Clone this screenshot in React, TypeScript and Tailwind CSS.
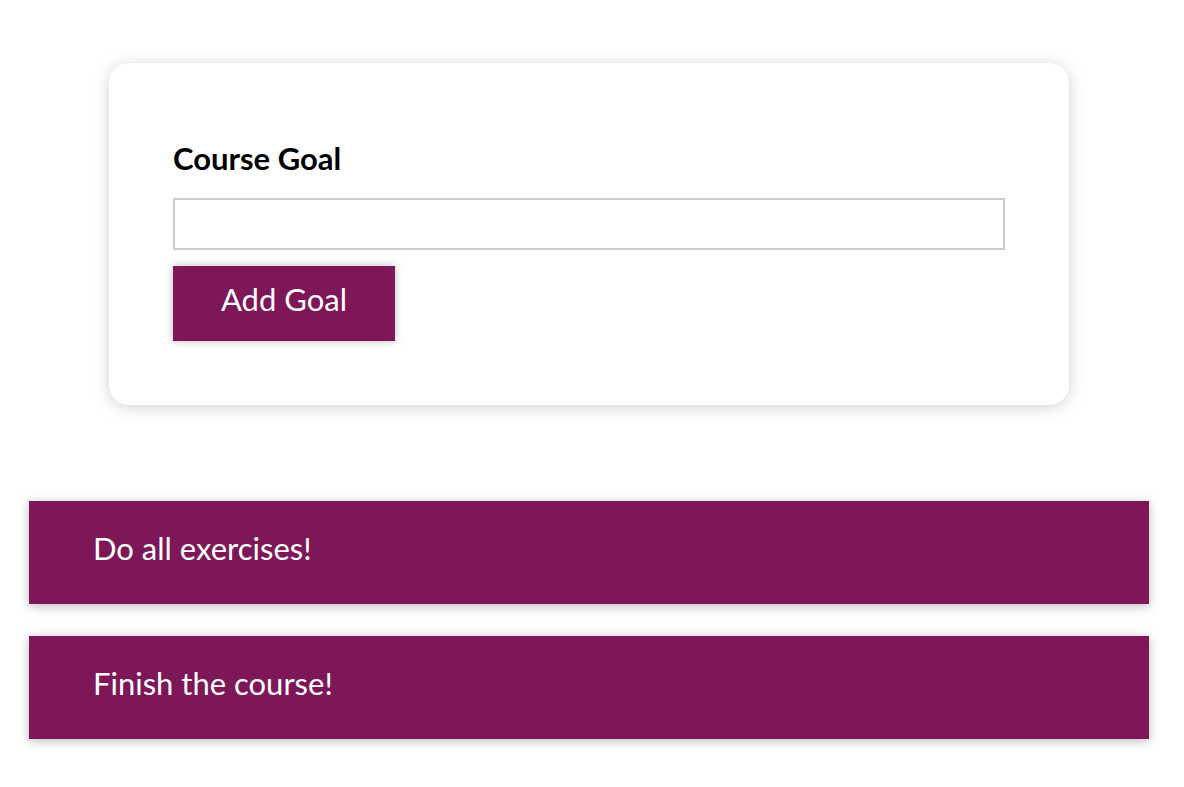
import React from "react";

export default function App() {
  const goals = ["Do all exercises!", "Finish the course!"];
  return (
    <div
      className="min-h-[787px] bg-white pt-[63px] pb-[40px]"
      style={{ fontFamily: "Lato, 'Noto Sans', sans-serif" }}
    >
      <form
        className="ml-[109px] w-[960px] rounded-[20px] bg-white p-[64px] shadow-[0_2px_16px_rgba(0,0,0,0.18)]"
        onSubmit={(e) => e.preventDefault()}
      >
        <div className="mt-[16px] mb-[16px]">
          <label className="block text-[31px] font-bold leading-[31px] mb-[24px] text-black">
            Course Goal
          </label>
          <input
            type="text"
            className="block w-full h-[52px] border-2 border-[#cbcbcb] px-[8px] text-[31px] outline-none"
          />
        </div>
        <button
          type="submit"
          className="block w-[222px] h-[75px] border-2 border-[#7d1758] bg-[#7d1758] text-white text-[31px] leading-[39px] pt-[12px] pb-[20px] shadow-[0_0_8px_rgba(0,0,0,0.26)]"
        >
          Add Goal
        </button>
      </form>
      <ul className="ml-[29px] mt-[96px] w-[1120px] flex flex-col gap-[32px]">
        {goals.map((g) => (
          <li
            key={g}
            className="bg-[#7d1758] text-white text-[31px] leading-[39px] pl-[64px] pr-[64px] pt-[28px] pb-[36px] shadow-[0_2px_10px_rgba(0,0,0,0.28)]"
          >
            {g}
          </li>
        ))}
      </ul>
    </div>
  );
}
